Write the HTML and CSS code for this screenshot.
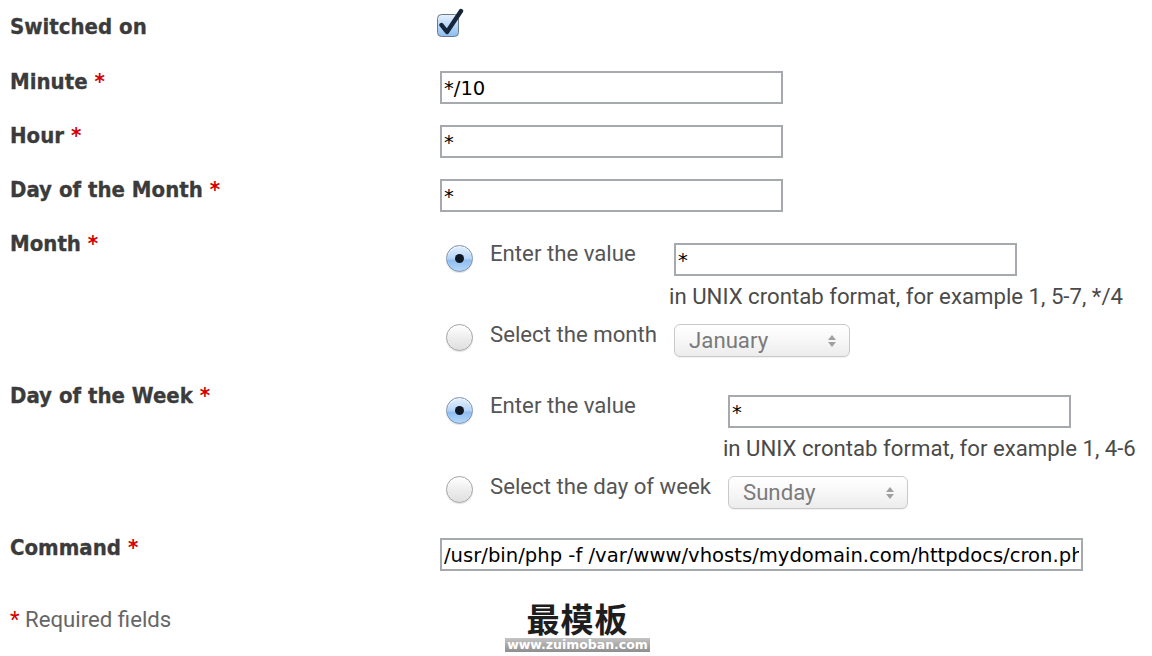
FILE: index.html
```html
<!DOCTYPE html>
<html lang="en">
<head>
<meta charset="utf-8">
<title>Cron task</title>
<link rel="stylesheet" href="styles.css">
</head>
<body>
<form class="cron">
  <div class="row row-switch">
    <div class="label">Switched on</div>
    <div class="field">
      <span class="checkbox">
        <svg width="30" height="30" viewBox="0 0 30 30">
          <defs>
            <linearGradient id="cbg" x1="0" y1="0" x2="0" y2="1">
              <stop offset="0" stop-color="#e6f1fd"/>
              <stop offset="0.5" stop-color="#b7d7f8"/>
              <stop offset="1" stop-color="#8cbdf0"/>
            </linearGradient>
          </defs>
          <rect x="1.5" y="6.5" width="21" height="22" rx="4" fill="url(#cbg)" stroke="#6c7a8c"/>
          <path d="M5.5 17 L11 24 L25 3" fill="none" stroke="#16253a" stroke-width="4.4" stroke-linecap="round" stroke-linejoin="round"/>
        </svg>
      </span>
    </div>
  </div>

  <div class="row">
    <div class="label">Minute <span class="req">*</span></div>
    <div class="field"><input class="text" type="text" value="*/10"></div>
  </div>

  <div class="row">
    <div class="label">Hour <span class="req">*</span></div>
    <div class="field"><input class="text" type="text" value="*"></div>
  </div>

  <div class="row">
    <div class="label">Day of the Month <span class="req">*</span></div>
    <div class="field"><input class="text" type="text" value="*"></div>
  </div>

  <div class="row row-choice">
    <div class="label">Month <span class="req">*</span></div>
    <div class="field choices">
      <span class="radio radio-on radio-first"></span>
      <span class="opt">Enter the value</span>
      <div class="value">
        <input class="text" type="text" value="*">
        <div class="hint">in UNIX crontab format, for example 1, 5-7, */4</div>
      </div>

      <span class="radio"></span>
      <span class="opt">Select the month</span>
      <div class="value">
        <span class="select select-month">January<span class="arrows"></span></span>
      </div>
    </div>
  </div>

  <div class="row row-choice">
    <div class="label">Day of the Week <span class="req">*</span></div>
    <div class="field choices">
      <span class="radio radio-on radio-first"></span>
      <span class="opt">Enter the value</span>
      <div class="value">
        <input class="text" type="text" value="*">
        <div class="hint">in UNIX crontab format, for example 1, 4-6</div>
      </div>

      <span class="radio"></span>
      <span class="opt">Select the day of week</span>
      <div class="value">
        <span class="select select-day">Sunday<span class="arrows"></span></span>
      </div>
    </div>
  </div>

  <div class="row row-command">
    <div class="label">Command <span class="req">*</span></div>
    <div class="field"><input class="text text-wide" type="text" value="/usr/bin/php -f /var/www/vhosts/mydomain.com/httpdocs/cron.php"></div>
  </div>

  <div class="footer">
    <div class="required"><span class="req">*</span> Required fields</div>
    <div class="watermark">
      <div class="wm-title">最模板</div>
      <div class="wm-url">www.zuimoban.com</div>
    </div>
  </div>
</form>
</body>
</html>
```

FILE: styles.css
```css
html, body {
  margin: 0;
  padding: 0;
  background: #ffffff;
}

.cron {
  padding: 13px 0 0 10px;
  font-family: "DejaVu Sans", Verdana, sans-serif;
}

.row {
  display: grid;
  grid-template-columns: 430px 1fr;
  align-items: start;
  margin-top: 18px;
}

.row-switch {
  margin-top: 0;
  margin-bottom: 28px;
}

.row-choice {
  margin-bottom: 25px;
}

.label {
  font-family: "DejaVu Sans Condensed", "DejaVu Sans", sans-serif;
  font-stretch: condensed;
  font-weight: bold;
  font-size: 22px;
  line-height: 26px;
  color: #3b3b3b;
  padding-top: 1px;
  -webkit-text-stroke: 0.3px #3b3b3b;
}

.req {
  color: #d40000;
  -webkit-text-stroke: 0;
}

.field {
  min-width: 0;
}

.checkbox {
  display: block;
  width: 30px;
  height: 30px;
  margin: -5px 0 0 -4px;
}

.checkbox svg {
  display: block;
}

.text {
  display: block;
  box-sizing: border-box;
  width: 343px;
  height: 33px;
  margin: 3px 0 0 0;
  padding: 1px 2px 0 2px;
  border: 2px solid #a6aaae;
  border-radius: 0;
  background: #fff;
  font-family: "DejaVu Sans", Verdana, sans-serif;
  font-size: 19.6px;
  color: #000;
  outline: none;
}

.text-wide {
  width: 643px;
  margin-top: 4px;
}

.choices {
  display: grid;
  grid-template-columns: 27px max-content 1fr;
  column-gap: 17px;
  row-gap: 16px;
  align-items: start;
  padding: 13px 0 0 6px;
}

.choices .opt + .value {
  margin-left: -5px;
}

.radio {
  display: block;
  box-sizing: border-box;
  width: 27px;
  height: 27px;
  border-radius: 50%;
  border: 1px solid #a3a3a3;
  background: linear-gradient(#ffffff, #ececec 55%, #e0e0e0);
  box-shadow: inset 0 1px 1px rgba(255,255,255,0.9), 0 1px 1px rgba(0,0,0,0.12);
}

.radio-first {
  margin-top: 2px;
}

.radio-on {
  position: relative;
  border-color: #7890ae;
  background: linear-gradient(#e3effc, #b8d6f7 48%, #8fbff0 58%, #b4d7f9);
}

.radio-on::after {
  content: "";
  position: absolute;
  left: 50%;
  top: 50%;
  width: 9px;
  height: 9px;
  margin: -4.5px 0 0 -4.5px;
  border-radius: 50%;
  background: #0f1722;
}

.opt {
  font-family: Roboto, "Liberation Sans", sans-serif;
  font-size: 22.2px;
  line-height: 20px;
  color: #555;
  white-space: nowrap;
}

.value .text {
  margin: 0 0 0 5px;
}

.hint {
  margin-top: 8px;
  font-family: Roboto, "Liberation Sans", sans-serif;
  font-size: 22.2px;
  line-height: 24px;
  color: #4a4a4a;
  white-space: nowrap;
}

.select {
  position: relative;
  display: block;
  box-sizing: border-box;
  height: 33px;
  margin-left: 5px;
  padding-left: 14px;
  border: 1px solid #c9c9c9;
  border-radius: 6px;
  background: linear-gradient(#ffffff, #f7f7f7 50%, #ececec);
  box-shadow: 0 1px 1px rgba(0,0,0,0.06);
  font-family: Roboto, "Liberation Sans", sans-serif;
  font-size: 22.2px;
  line-height: 31px;
  color: #7a7a7a;
}

.select-month {
  width: 176px;
}

.select-day {
  width: 180px;
}

.arrows {
  position: absolute;
  right: 13px;
  top: 10px;
  width: 8px;
  height: 12px;
}

.arrows::before,
.arrows::after {
  content: "";
  position: absolute;
  left: 0;
  border-left: 4px solid transparent;
  border-right: 4px solid transparent;
}

.arrows::before {
  top: 0;
  border-bottom: 5px solid #a0a0a0;
}

.arrows::after {
  bottom: 0;
  border-top: 5px solid #a0a0a0;
}

.footer {
  display: flex;
  align-items: flex-start;
  margin-top: 36px;
}

.required {
  width: 495px;
  font-family: Roboto, "Liberation Sans", sans-serif;
  font-size: 22.2px;
  line-height: 24px;
  color: #666;
}

.watermark {
  display: flex;
  flex-direction: column;
  align-items: center;
  width: 145px;
  margin-top: -6px;
}

.wm-title {
  font-family: "Noto Sans CJK SC", sans-serif;
  font-weight: bold;
  font-size: 33px;
  line-height: 34px;
  color: #1e1e1e;
  letter-spacing: 1px;
}

.wm-url {
  margin-top: 3px;
  padding: 0 2px;
  font-family: "DejaVu Sans", sans-serif;
  font-weight: bold;
  font-size: 12.5px;
  line-height: 14px;
  color: #ffffff;
  background: linear-gradient(#c4c4c4, #8e8e8e);
  white-space: nowrap;
}
```
